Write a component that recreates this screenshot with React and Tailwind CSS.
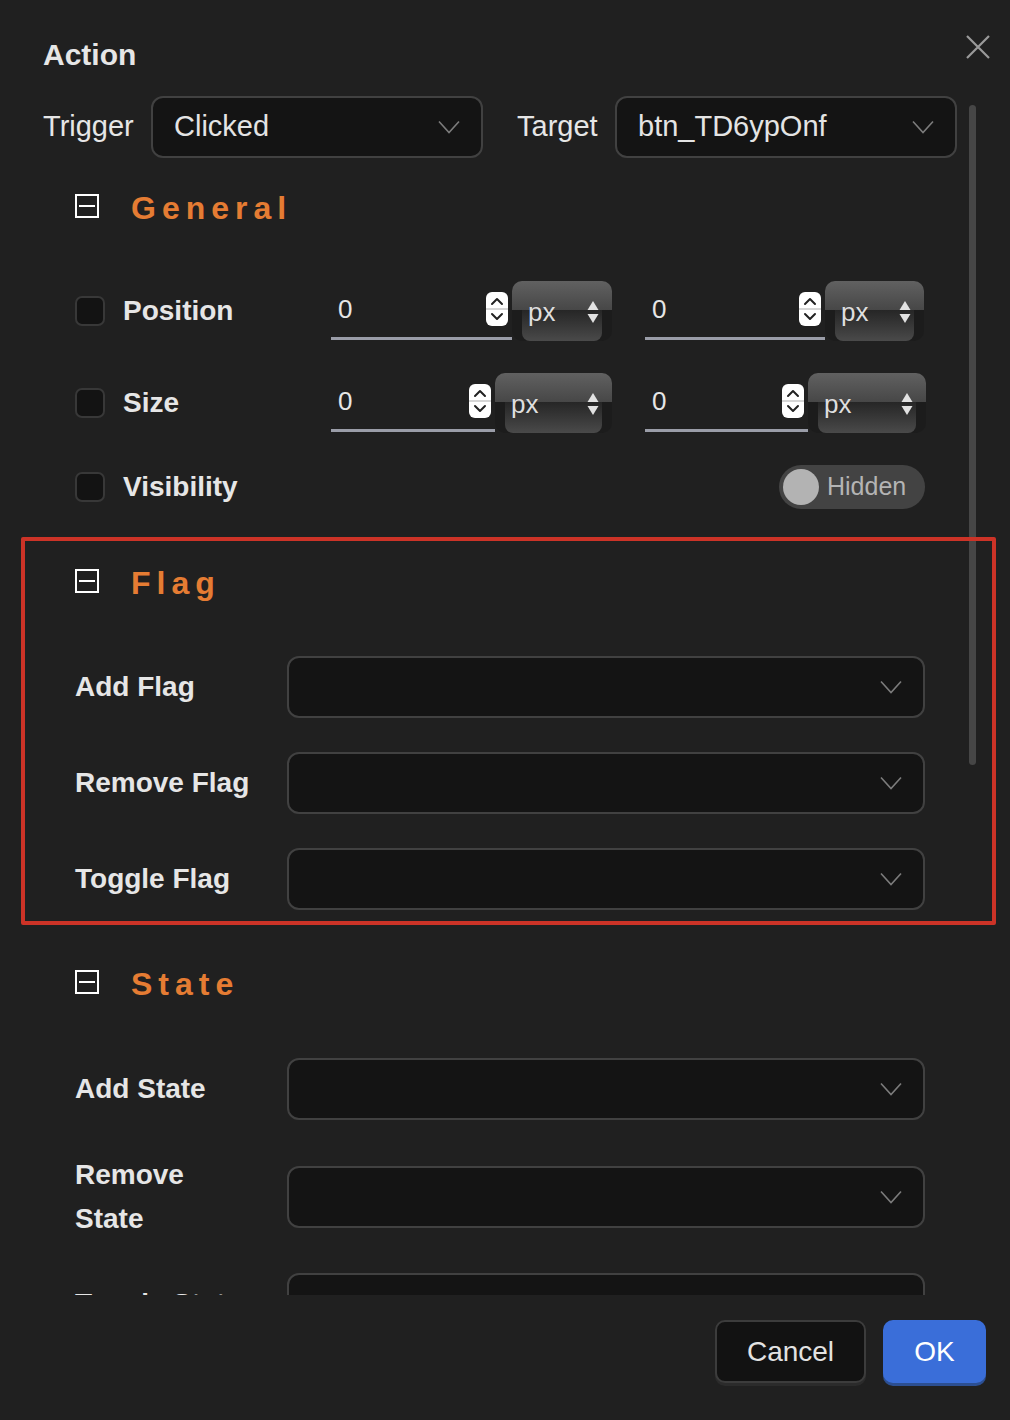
import React from 'react'

function Chevron({ className }) {
  return (
    <svg width="22" height="14" viewBox="0 0 22 14" className={className}>
      <path d="M1 1.5 L11 12.5 L21 1.5" fill="none" stroke="currentColor" strokeWidth="1.6" />
    </svg>
  )
}

function Select({ value, className = '' }) {
  return (
    <div
      className={`flex h-[62px] items-center justify-between rounded-[12px] border-2 border-[#414141] bg-[#141414] pl-[21px] pr-[21px] ${className}`}
    >
      <span className="text-[29px] text-[#e4e4e4]">{value}</span>
      <Chevron className="text-[#7c7c7c]" />
    </div>
  )
}

function Stepper() {
  return (
    <svg width="22" height="34" viewBox="0 0 22 34">
      <rect width="22" height="34" rx="6" fill="#ffffff" />
      <line x1="0" y1="17" x2="22" y2="17" stroke="#c9c9c9" strokeWidth="1.5" />
      <path d="M6 12 L11 7 L16 12" fill="none" stroke="#222" strokeWidth="2" strokeLinecap="round" strokeLinejoin="round" />
      <path d="M6 22 L11 27 L16 22" fill="none" stroke="#222" strokeWidth="2" strokeLinecap="round" strokeLinejoin="round" />
    </svg>
  )
}

function UnitSelect({ className = '' }) {
  return (
    <div className={`relative h-[60px] shrink-0 overflow-hidden rounded-[10px] bg-[#1c1c1c] ${className}`}>
      <div className="h-[29px] bg-gradient-to-b from-[#616161] to-[#474747]" />
      <div className="mx-[10px] h-[31px] rounded-b-[8px] bg-gradient-to-b from-[#262626] to-[#4a4a4a]" />
      <div className="absolute inset-0 flex items-center justify-between pl-[16px] pr-[12px] pt-[2px]">
        <span className="text-[26px] text-[#dedede]">px</span>
        <svg width="14" height="26" viewBox="0 0 14 26">
          <path d="M1.5 11 L7 2 L12.5 11Z" fill="#e2e2e2" />
          <path d="M1.5 15 L12.5 15 L7 24Z" fill="#e2e2e2" />
        </svg>
      </div>
    </div>
  )
}

function NumField({ inputClass, unitClass }) {
  return (
    <div className="flex items-end">
      <div className={`mb-[1px] flex h-[59px] items-center justify-between border-b-[3px] border-[#9a9da8] pl-[7px] pr-[4px] ${inputClass}`}>
        <span className="text-[26px] text-[#e6e6e6]">0</span>
        <Stepper />
      </div>
      <UnitSelect className={unitClass} />
    </div>
  )
}

function Checkbox() {
  return <div className="h-[30px] w-[30px] shrink-0 rounded-[7px] border-2 border-[#383838] bg-[#131313]" />
}

function SectionHeader({ title, className = '' }) {
  return (
    <div className={`ml-[32px] flex h-[48px] items-center ${className}`}>
      <svg width="24" height="24" viewBox="0 0 24 24" className="shrink-0">
        <rect x="1" y="1" width="22" height="22" fill="none" stroke="#ffffff" strokeWidth="2" />
        <line x1="4" y1="12" x2="20" y2="12" stroke="#ffffff" strokeWidth="2" />
      </svg>
      <span className="ml-[32px] mt-[4px] text-[32px] font-bold tracking-[6px] text-[#e57c33]">{title}</span>
    </div>
  )
}

function FieldRow({ label, className = '', tall = false }) {
  return (
    <div className={`ml-[32px] flex w-[850px] items-center ${tall ? 'h-[88px]' : 'h-[62px]'} ${className}`}>
      <div className="w-[212px] text-[28px] font-bold leading-[44px] text-[#e6e6e6]">{label}</div>
      <Select value="" className="w-[638px]" />
    </div>
  )
}

export default function App() {
  return (
    <div className="relative h-[1420px] w-[1010px] overflow-hidden bg-[#202020] font-['Liberation_Sans',Arial,sans-serif] text-[#e6e6e6]">
      {/* header */}
      <div className="flex h-[96px] items-start justify-between pl-[43px] pr-[20px]">
        <h1 className="mt-[37px] text-[30px] font-bold leading-[36px] text-[#e6e6e6]">Action</h1>
        <svg width="24" height="24" viewBox="0 0 24 24" className="mt-[35px]">
          <path d="M1 1 L23 23 M23 1 L1 23" stroke="#9a9a9a" strokeWidth="2.2" />
        </svg>
      </div>

      {/* scrolling body */}
      <div className="relative h-[1199px] overflow-hidden pl-[43px]">
        <div className="flex h-[62px] items-center">
          <div className="w-[108px] text-[29px] text-[#e6e6e6]">Trigger</div>
          <Select value="Clicked" className="w-[332px]" />
          <div className="ml-[34px] w-[98px] text-[29px] text-[#e6e6e6]">Target</div>
          <Select value="btn_TD6ypOnf" className="w-[342px]" />
        </div>

        <SectionHeader title="General" className="mt-[24px]" />

        <div className="ml-[32px] mt-[51px] flex h-[60px] items-center">
          <div className="flex w-[256px] items-center">
            <Checkbox />
            <span className="ml-[18px] text-[28px] font-bold text-[#e6e6e6]">Position</span>
          </div>
          <NumField inputClass="w-[181px]" unitClass="w-[100px]" />
          <div className="ml-[33px]">
            <NumField inputClass="w-[180px]" unitClass="w-[99px]" />
          </div>
        </div>

        <div className="ml-[32px] mt-[32px] flex h-[60px] items-center">
          <div className="flex w-[256px] items-center">
            <Checkbox />
            <span className="ml-[18px] text-[28px] font-bold text-[#e6e6e6]">Size</span>
          </div>
          <NumField inputClass="w-[164px]" unitClass="w-[117px]" />
          <div className="ml-[33px]">
            <NumField inputClass="w-[163px]" unitClass="w-[118px]" />
          </div>
        </div>

        <div className="ml-[32px] mt-[32px] flex h-[44px] w-[850px] items-center justify-between">
          <div className="flex items-center">
            <Checkbox />
            <span className="ml-[18px] text-[28px] font-bold text-[#e6e6e6]">Visibility</span>
          </div>
          <div className="flex h-[44px] w-[146px] items-center rounded-full bg-[#434343] pl-[4px]">
            <div className="h-[36px] w-[36px] rounded-full bg-[#b3b3b3]" />
            <span className="ml-[8px] text-[25px] text-[#b4b4b4]">Hidden</span>
          </div>
        </div>

        <SectionHeader title="Flag" className="mt-[48px]" />
        <FieldRow label="Add Flag" className="mt-[51px]" />
        <FieldRow label="Remove Flag" className="mt-[34px]" />
        <FieldRow label="Toggle Flag" className="mt-[34px]" />

        <SectionHeader title="State" className="mt-[48px]" />
        <FieldRow label="Add State" className="mt-[52px]" />
        <FieldRow label={<>Remove<br />State</>} className="mt-[33px]" tall />
        <FieldRow label="Toggle State" className="mt-[32px]" />
      </div>

      {/* footer */}
      <div className="flex justify-end gap-[17px] pr-[24px] pt-[25px]">
        <button className="h-[63px] w-[151px] rounded-[10px] border-2 border-[#3c3c3c] bg-[#121212] text-[28px] text-[#e2e2e2] shadow-[0_3px_0_#2b2b2b]">
          Cancel
        </button>
        <button className="h-[63px] w-[103px] rounded-[10px] bg-[#3a6ed9] text-[28px] text-white shadow-[0_3px_0_#2c4f92]">
          OK
        </button>
      </div>

      {/* scrollbar thumb */}
      <div className="absolute left-[969px] top-[105px] h-[660px] w-[7px] rounded-full bg-[#464646]" />

      {/* annotation box */}
      <div className="pointer-events-none absolute left-[21px] top-[537px] h-[388px] w-[975px] rounded-[2px] border-4 border-[#cc3327]" />
    </div>
  )
}
